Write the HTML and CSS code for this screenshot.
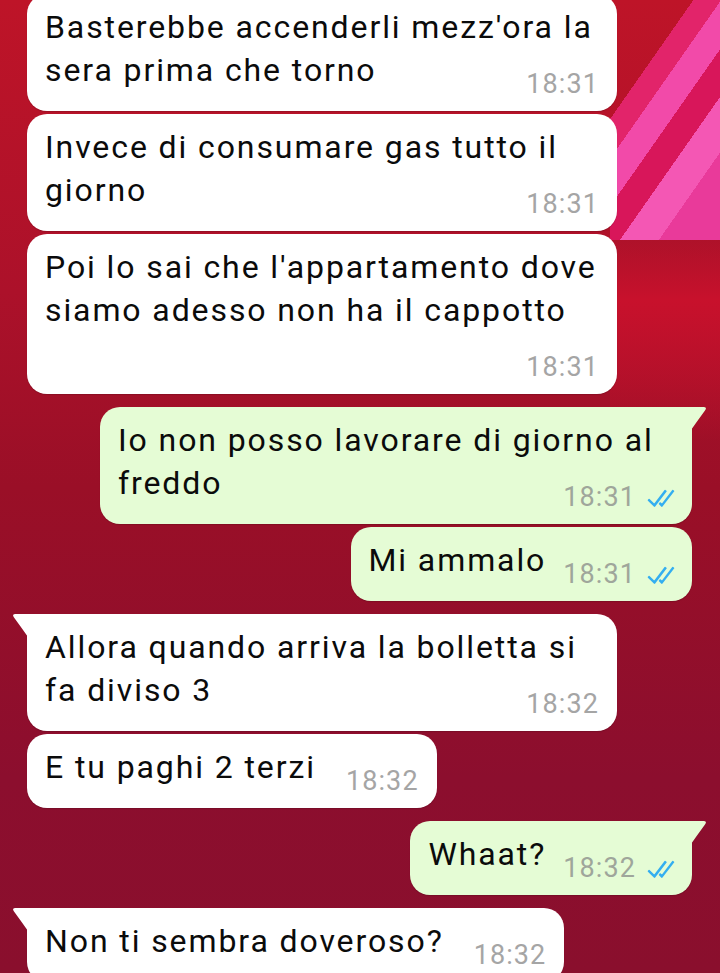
FILE: index.html
```html
<!DOCTYPE html>
<html lang="it">
<head>
    <meta charset="UTF-8">
    <meta name="viewport" content="width=device-width, initial-scale=1.0">
    <title>Chat</title>
    <link rel="stylesheet" href="styles.css">
</head>
<body>

    <div class="chat">
        <div class="msg in">
            <p class="bubble">Basterebbe accenderli mezz'ora la sera prima che torno<span class="meta"><span class="time">18:31</span></span></p>
        </div>
        <div class="msg in">
            <p class="bubble">Invece di consumare gas tutto il giorno<span class="meta"><span class="time">18:31</span></span></p>
        </div>
        <div class="msg in">
            <p class="bubble">Poi lo sai che l'appartamento dove siamo adesso non ha il cappotto<span class="meta"><span class="time">18:31</span></span></p>
        </div>

        <div class="msg out tail">
            <p class="bubble">Io non posso lavorare di giorno al freddo<span class="meta"><span class="time">18:31</span><svg class="ticks" viewBox="0 0 16 11"><path d="M15 1.3l-.5-.4a.4.4 0 0 0-.5.1L8.7 7.9a.3.3 0 0 1-.5 0l-.4-.3a.3.3 0 0 0-.5 0l-.4.5a.4.4 0 0 0 0 .5l1.3 1.3c.1.1.4.1.5 0L15 1.8a.4.4 0 0 0 0-.5zm-4.1 0l-.5-.4a.4.4 0 0 0-.5.1L4.6 7.9a.3.3 0 0 1-.5 0L1.9 5.8a.4.4 0 0 0-.5 0l-.4.4a.4.4 0 0 0 0 .5l3.3 3.2c.1.1.4.1.5 0L11 1.8a.4.4 0 0 0 0-.5z"/></svg></span></p>
        </div>
        <div class="msg out">
            <p class="bubble">Mi ammalo<span class="meta"><span class="time">18:31</span><svg class="ticks" viewBox="0 0 16 11"><path d="M15 1.3l-.5-.4a.4.4 0 0 0-.5.1L8.7 7.9a.3.3 0 0 1-.5 0l-.4-.3a.3.3 0 0 0-.5 0l-.4.5a.4.4 0 0 0 0 .5l1.3 1.3c.1.1.4.1.5 0L15 1.8a.4.4 0 0 0 0-.5zm-4.1 0l-.5-.4a.4.4 0 0 0-.5.1L4.6 7.9a.3.3 0 0 1-.5 0L1.9 5.8a.4.4 0 0 0-.5 0l-.4.4a.4.4 0 0 0 0 .5l3.3 3.2c.1.1.4.1.5 0L11 1.8a.4.4 0 0 0 0-.5z"/></svg></span></p>
        </div>

        <div class="msg in tail">
            <p class="bubble">Allora quando arriva la bolletta si fa diviso 3<span class="meta"><span class="time">18:32</span></span></p>
        </div>
        <div class="msg in">
            <p class="bubble">E tu paghi 2 terzi<span class="meta"><span class="time">18:32</span></span></p>
        </div>

        <div class="msg out tail">
            <p class="bubble">Whaat?<span class="meta"><span class="time">18:32</span><svg class="ticks" viewBox="0 0 16 11"><path d="M15 1.3l-.5-.4a.4.4 0 0 0-.5.1L8.7 7.9a.3.3 0 0 1-.5 0l-.4-.3a.3.3 0 0 0-.5 0l-.4.5a.4.4 0 0 0 0 .5l1.3 1.3c.1.1.4.1.5 0L15 1.8a.4.4 0 0 0 0-.5zm-4.1 0l-.5-.4a.4.4 0 0 0-.5.1L4.6 7.9a.3.3 0 0 1-.5 0L1.9 5.8a.4.4 0 0 0-.5 0l-.4.4a.4.4 0 0 0 0 .5l3.3 3.2c.1.1.4.1.5 0L11 1.8a.4.4 0 0 0 0-.5z"/></svg></span></p>
        </div>

        <div class="msg in tail">
            <p class="bubble">Non ti sembra doveroso?<span class="meta"><span class="time">18:32</span></span></p>
        </div>
    </div>

</body>
</html>
```

FILE: styles.css
```css
html, body {
    height: 100%;
}
body {
    margin: 0;
    overflow: hidden;
    font-family: Roboto, "Liberation Sans", sans-serif;
    background-color: #9a0f28;
    background-image:
        /* strisce rosa in alto a destra */
        linear-gradient(125deg, transparent 0 30%, #e2246a 30% 40%, #f24aa9 40% 52%, #d8165a 52% 64%, #f457b4 64% 78%, #e93a9a 78% 100%),
        linear-gradient(180deg, transparent 0 55%, #c8112c 68%, rgba(200, 17, 44, 0) 100%),
        linear-gradient(180deg, #be1428 0%, #ac112a 30%, #9a0f27 50%, #8c0e2e 80%, #8a0f2d 100%);
    background-size: 110px 240px, 110px 440px, 100% 100%;
    background-position: right top, right top, 0 0;
    background-repeat: no-repeat;
}
.chat {
    display: flex;
    flex-direction: column;
    gap: 3px;
    padding: 0 28px 0 27px;
    margin-top: -6px;
}
.msg {
    display: flex;
}
.msg.in {
    justify-content: flex-start;
}
.msg.out {
    justify-content: flex-end;
}
.msg.tail {
    margin-top: 10px;
}
.bubble {
    position: relative;
    margin: 0;
    max-width: 590px;
    box-sizing: border-box;
    padding: 12px 18px 14px 18px;
    border-radius: 20px;
    background-color: #fff;
    color: #0b0b0b;
    font-size: 32px;
    line-height: 43px;
    letter-spacing: 1.9px;
    box-shadow: 0 1px 1px rgba(0, 0, 0, 0.15);
}
.out .bubble {
    background-color: #e5fcd5;
    padding-right: 16px;
    max-width: 592px;
}
/* orario in basso a destra, sull'ultima riga se c'e posto */
.meta {
    float: right;
    margin: 22px 0 0 30px;
    line-height: 26px;
    font-size: 27px;
    letter-spacing: 1.1px;
    color: #a5a5a5;
    white-space: nowrap;
}
.out .meta {
    margin-left: 17px;
    color: #9fa69b;
}
.ticks {
    width: 30px;
    height: 21px;
    margin-left: 10px;
    vertical-align: -3px;
    fill: #34aef0;
}
/* codina della nuvoletta */
.tail .bubble::before {
    content: "";
    position: absolute;
    top: 0;
    width: 16px;
    height: 23px;
    background-color: inherit;
}
.out.tail .bubble {
    border-top-right-radius: 0;
}
.out.tail .bubble::before {
    left: calc(100% - 1px);
    clip-path: path("M0 0 H12.5 Q16.5 0 14 3.5 Q7 13 0 23 Z");
}
.in.tail .bubble {
    border-top-left-radius: 0;
}
.in.tail .bubble::before {
    right: calc(100% - 1px);
    clip-path: path("M16 0 H3.5 Q-0.5 0 2 3.5 Q9 13 16 23 Z");
}
```
